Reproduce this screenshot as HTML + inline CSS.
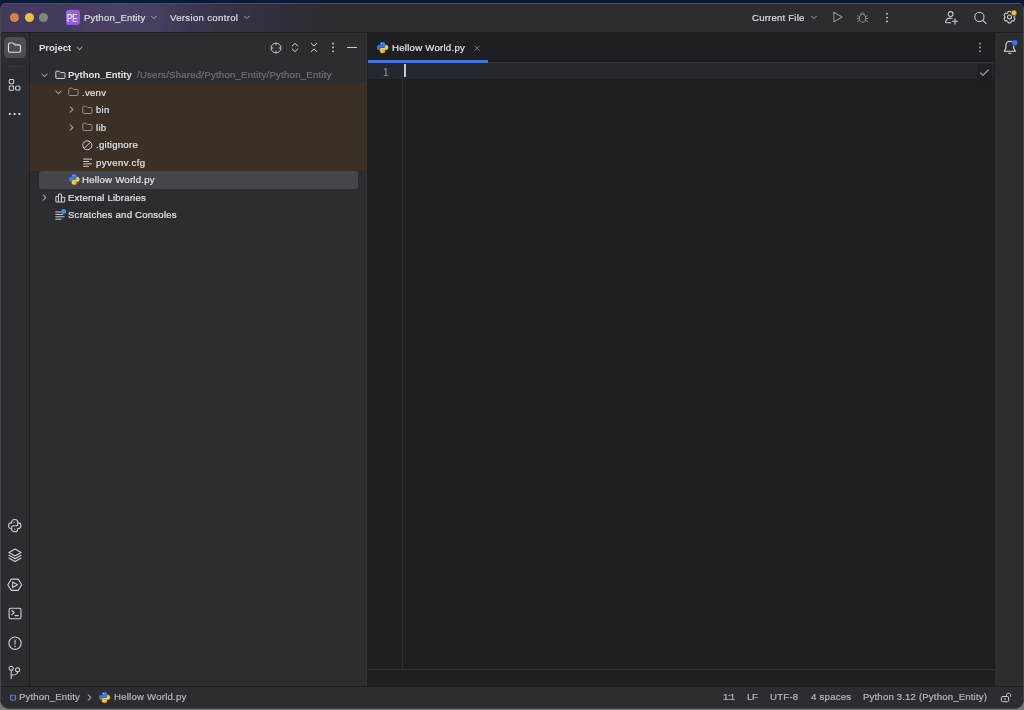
<!DOCTYPE html>
<html lang="en">
<head>
<meta charset="utf-8">
<title>Python_Entity – Hellow World.py</title>
<style>
*{box-sizing:border-box;margin:0;padding:0}
html,body{width:1024px;height:710px;overflow:hidden}
body{position:relative;font-family:"Liberation Sans",sans-serif;font-size:9.6px;letter-spacing:.25px;color:#dfe1e5;
 background:linear-gradient(to bottom,#0a1a36 0,#0a1a36 12px,#77777b 12px,#77777b 100%)}
.abs{position:absolute}
#win{position:absolute;left:0;top:3px;width:1024px;height:705.8px;border-radius:6px 6px 10px 10px;background:#2b2d30;overflow:hidden;
 box-shadow:inset 0 0 0 1px #46474c}
#win:before{content:"";position:absolute;left:0;top:0;right:0;height:1px;background:#515257;z-index:20}
#title{position:absolute;left:1px;top:1px;width:1022px;height:28px;
 background:linear-gradient(to right,#453b5d 0,#42395a 140px,#3c354f 200px,#343140 250px,#2e2e35 300px,#2b2d30 335px)}
#titleline{position:absolute;left:1px;top:29px;width:1022px;height:1px;background:#1e1f22}
.t{position:absolute;white-space:nowrap;line-height:12px;height:12px;will-change:transform;-webkit-text-stroke:.22px currentColor}
#lstrip{position:absolute;left:1px;top:30px;width:28px;height:653px;background:#2b2d30}
#lline{position:absolute;left:29px;top:30px;width:1px;height:653px;background:#1e1f22}
#proj{position:absolute;left:30px;top:30px;width:336px;height:653px;background:#2b2d30}
#pline{position:absolute;left:366px;top:30px;width:1px;height:653px;background:#323438}
#editor{position:absolute;left:367px;top:30px;width:628px;height:653px;background:#1e1f22}
#rstrip{position:absolute;left:995px;top:30px;width:28px;height:653px;background:#2b2d30}
#status{position:absolute;left:1px;top:683px;width:1022px;height:22px;background:#2b2d30;border-top:1px solid #1e1f22}
.row{position:absolute;left:0;width:336px;height:17.5px}
svg{position:absolute;overflow:visible}
</style>
</head>
<body>
<div id="win">
 <div id="title">
  <div class="abs" style="left:60px;top:-20px;width:130px;height:68px;border-radius:50%;background:radial-gradient(ellipse at center,rgba(98,84,130,.28) 0,rgba(98,84,130,.18) 45%,rgba(98,84,130,0) 72%)"></div>
  <div class="abs" style="left:8.9px;top:8.9px;width:9.5px;height:9.5px;border-radius:50%;background:#d6804e"></div>
  <div class="abs" style="left:23.9px;top:8.9px;width:9.5px;height:9.5px;border-radius:50%;background:#ecc046"></div>
  <div class="abs" style="left:37.9px;top:8.9px;width:9.5px;height:9.5px;border-radius:50%;background:#7e8778"></div>
  <div class="abs" style="left:65px;top:6px;width:14.3px;height:14.8px;border-radius:3px;background:linear-gradient(135deg,#a468e8,#8a55d8)"></div>
  <div class="t" style="left:66.2px;top:9px;font-size:10.2px;letter-spacing:0;color:#f4effc;transform:scaleX(.78);transform-origin:0 0">PE</div>
  <div class="t" style="left:83px;top:7.6px;color:#dcdde2;letter-spacing:.17px">Python_Entity</div>
  <svg style="left:148.6px;top:11.3px" width="8" height="6" viewBox="0 0 8 6"><path d="M1.5 1.2 L3.9 3.6 L6.3 1.2" fill="none" stroke="#a6a9b0" stroke-width="1" stroke-linecap="round" stroke-linejoin="round"/></svg>
  <div class="t" style="left:169px;top:7.6px;color:#dcdde2;letter-spacing:.32px">Version control</div>
  <svg style="left:241.7px;top:11.3px" width="8" height="6" viewBox="0 0 8 6"><path d="M1.5 1.2 L3.9 3.6 L6.3 1.2" fill="none" stroke="#a6a9b0" stroke-width="1" stroke-linecap="round" stroke-linejoin="round"/></svg>
  <div class="t" style="left:751px;top:7.6px;color:#dcdde2;letter-spacing:.2px">Current File</div>
  <svg style="left:808.5px;top:11.3px" width="8" height="6" viewBox="0 0 8 6"><path d="M1.5 1.2 L3.9 3.6 L6.3 1.2" fill="none" stroke="#a6a9b0" stroke-width="1" stroke-linecap="round" stroke-linejoin="round"/></svg>
  <svg style="left:831px;top:7.4px" width="12" height="12" viewBox="0 0 12 12"><path d="M1.8 1.3 L10.2 6 L1.8 10.7 Z" fill="none" stroke="#8b9482" stroke-width="1.1" stroke-linejoin="round"/></svg>
  <svg style="left:855px;top:7.7px" width="13" height="11.5" viewBox="0 0 13 12" preserveAspectRatio="none"><g fill="none" stroke="#8b9482" stroke-width="1"><path d="M3.6 5.2 C3.6 3.4 4.8 2.6 6.5 2.6 C8.2 2.6 9.4 3.4 9.4 5.2 L9.4 7.6 C9.4 9.4 8.2 10.6 6.5 10.6 C4.8 10.6 3.6 9.4 3.6 7.6 Z"/><path d="M4.6 2.9 C4.6 1.6 5.4 .9 6.5 .9 C7.6 .9 8.4 1.6 8.4 2.9"/><path d="M3.6 5 L1.2 3.8 M3.6 6.9 L.9 6.9 M3.6 8.6 L1.2 10 M9.4 5 L11.8 3.8 M9.4 6.9 L12.1 6.9 M9.4 8.6 L11.8 10"/></g></svg>
  <svg style="left:884px;top:8px" width="4" height="12" viewBox="0 0 4 12"><g fill="#ced0d6"><circle cx="2" cy="1.8" r=".95"/><circle cx="2" cy="5.6" r=".95"/><circle cx="2" cy="9.4" r=".95"/></g></svg>
  <svg style="left:943px;top:6px" width="15" height="15" viewBox="0 0 15 15"><g fill="none" stroke="#ced0d6" stroke-width="1.05" stroke-linecap="round"><circle cx="6.6" cy="4" r="2.4"/><path d="M8 8.3 C7.6 8.2 7.1 8.1 6.6 8.1 C3.6 8.1 1.9 9.9 1.6 12 C1.5 12.4 1.8 12.7 2.2 12.7 L6.8 12.7"/><path d="M11 8.7 L11 14 M8.4 11.3 L13.7 11.3"/></g></svg>
  <svg style="left:972px;top:7px" width="14" height="14" viewBox="0 0 14 14"><g fill="none" stroke="#ced0d6" stroke-width="1.05" stroke-linecap="round"><circle cx="6.4" cy="5.9" r="4.6"/><path d="M9.8 9.3 L13.2 12.7"/></g></svg>
  <svg style="left:1001px;top:6px" width="15" height="15" viewBox="0 0 15 15"><g fill="none" stroke="#ced0d6" stroke-width="1.05" stroke-linejoin="round"><path d="M6.1 1.6 C6.9 1.1 8.1 1.1 8.9 1.6 L9.3 2.9 C9.6 3 9.9 3.2 10.2 3.4 L11.5 3.1 C12.3 3.7 12.9 4.7 13 5.7 L12 6.6 C12 6.9 12 7.2 12 7.5 L13 8.4 C12.9 9.4 12.3 10.4 11.5 11 L10.2 10.7 C9.9 10.9 9.6 11.1 9.3 11.2 L8.9 12.5 C8.1 13 6.9 13 6.1 12.5 L5.7 11.2 C5.4 11.1 5.1 10.9 4.8 10.7 L3.5 11 C2.7 10.4 2.1 9.4 2 8.4 L3 7.5 C3 7.2 3 6.9 3 6.6 L2 5.7 C2.1 4.7 2.7 3.7 3.5 3.1 L4.8 3.4 C5.1 3.2 5.4 3 5.7 2.9 Z"/><circle cx="7.5" cy="7.05" r="2"/></g><circle cx="12" cy="2.9" r="2.8" fill="#ecc046" stroke="#2b2d30" stroke-width=".6"/></svg>
 </div>
 <div id="titleline"></div>
 <div id="lstrip">
  <div class="abs" style="left:2.8px;top:3.5px;width:22px;height:21.6px;border-radius:4.5px;background:#4b4d52"></div>
  <svg style="left:6px;top:7.5px" width="15" height="14" viewBox="0 0 15 14"><path d="M1.5 3.4 C1.5 2.6 2.1 2 2.9 2 L5.6 2 C6 2 6.3 2.15 6.6 2.4 L8 3.8 L12.1 3.8 C12.9 3.8 13.5 4.4 13.5 5.2 L13.5 9.8 C13.5 10.6 12.9 11.2 12.1 11.2 L2.9 11.2 C2.1 11.2 1.5 10.6 1.5 9.8 Z" fill="none" stroke="#dcdde1" stroke-width="1.15" stroke-linejoin="round"/></svg>
  <div class="abs" style="left:5px;top:32.6px;width:17px;height:1px;background:#35373c"></div>
  <svg style="left:7px;top:45px" width="14" height="14" viewBox="0 0 14 14"><g fill="none" stroke="#ced0d6" stroke-width="1.05"><rect x="1.3" y="1.4" width="4.3" height="4.3" rx=".9"/><rect x="1.3" y="8" width="4.3" height="4.3" rx=".9"/><rect x="7.5" y="8" width="4.6" height="4.3" rx="2"/></g></svg>
  <svg style="left:7px;top:79px" width="14" height="4" viewBox="0 0 14 4"><g fill="#ced0d6"><rect x=".8" y=".9" width="2" height="2" rx=".4"/><rect x="5.6" y=".9" width="2" height="2" rx=".4"/><rect x="10.4" y=".9" width="2" height="2" rx=".4"/></g></svg>

  <svg style="left:6.9px;top:485.9px" width="13.4" height="13.4" viewBox="0 0 13.4 13.4"><g fill="none" stroke="#ced0d6" stroke-width="1.05" stroke-linejoin="round" stroke-linecap="round"><path d="M3.65 3.9 V3.2 C3.65 1.5 4.9 .55 6.7 .55 C8.5 .55 9.75 1.5 9.75 3.2 V3.9 H10.4 C12 3.9 12.85 5 12.85 6.7 C12.85 8.4 12 9.5 10.4 9.5 H9.75 V10.2 C9.75 11.9 8.5 12.85 6.7 12.85 C4.9 12.85 3.65 11.9 3.65 10.2 V9.5 H3 C1.4 9.5 .55 8.4 .55 6.7 C.55 5 1.4 3.9 3 3.9 Z"/><path d="M9.75 3.9 V5 C9.75 6.1 9.1 6.7 8 6.7 H5.4 C4.3 6.7 3.65 7.3 3.65 8.4 V9.5"/></g><circle cx="6.2" cy="3.3" r=".65" fill="#ced0d6"/><circle cx="6.9" cy="10.2" r=".65" fill="#ced0d6"/></svg>

  <svg style="left:6.5px;top:515px" width="14" height="14.5" viewBox="0 0 14 14.5"><g fill="none" stroke="#ced0d6" stroke-width="1.1" stroke-linejoin="round" stroke-linecap="round"><path d="M7 1.1 L13.1 4.5 L7 7.9 L.9 4.5 Z"/><path d="M.9 7.3 L7 10.7 L13.1 7.3"/><path d="M.9 10 L7 13.4 L13.1 10"/></g></svg>

  <svg style="left:6px;top:544.5px" width="15.5" height="13.5" viewBox="0 0 15.5 13.5"><g fill="none" stroke="#ced0d6" stroke-width="1.1" stroke-linejoin="round"><path d="M4.3 1.1 L11.2 1.1 L14.7 6.8 L11.2 12.4 L4.3 12.4 L.8 6.8 Z"/><path d="M5.6 4 L10.6 6.8 L5.6 9.6 Z"/></g></svg>

  <svg style="left:6.5px;top:574px" width="14" height="13" viewBox="0 0 14 13"><g fill="none" stroke="#ced0d6" stroke-width="1.1" stroke-linejoin="round" stroke-linecap="round"><rect x="1.1" y="1.3" width="11.9" height="10.4" rx="1.4"/><path d="M3.8 3.5 L6.2 5.5 L3.8 7.6"/><path d="M7 8.6 L10.2 8.6"/></g></svg>

  <svg style="left:6.5px;top:602.5px" width="14.2" height="14.2" viewBox="0 0 14.2 14.2"><g fill="none" stroke="#ced0d6" stroke-width="1.1" stroke-linecap="round"><circle cx="7.05" cy="7.2" r="6.15"/><path d="M7.05 4 L7.05 8"/></g><circle cx="7.05" cy="10.3" r=".75" fill="#ced0d6"/></svg>

  <svg style="left:7px;top:631.5px" width="13" height="15" viewBox="0 0 13 15"><g fill="none" stroke="#ced0d6" stroke-width="1.05" stroke-linecap="round"><circle cx="3.2" cy="3.2" r="2.05"/><circle cx="9.6" cy="4.7" r="2.05"/><path d="M3.2 5.3 L3.2 13.6"/><path d="M9.6 6.8 C9.6 9.4 8 10.1 3.2 10.1"/></g></svg>
 </div>
 <div id="lline"></div>
 <div id="proj">
  <div class="t" style="left:8.5px;top:8.5px;font-weight:700;-webkit-text-stroke:0;color:#dfe1e5;letter-spacing:-.05px">Project</div>
  <svg style="left:46.1px;top:12.9px" width="7" height="5" viewBox="0 0 7 5"><path d="M.9 1 L3.5 3.7 L6.1 1" fill="none" stroke="#9da0a8" stroke-width="1.05" stroke-linecap="round" stroke-linejoin="round"/></svg>
  <svg style="left:239.7px;top:8.8px" width="12" height="12" viewBox="0 0 12 12"><g fill="none" stroke="#ced0d6" stroke-width=".95"><circle cx="6" cy="6" r="4.9"/><path d="M6 1.1 L6 3.4 M6 8.6 L6 10.9 M1.1 6 L3.4 6 M8.6 6 L10.9 6" stroke-width=".85"/></g></svg>
  <svg style="left:261px;top:9px" width="8" height="11" viewBox="0 0 8 11"><g fill="none" stroke="#ced0d6" stroke-width="1" stroke-linecap="round" stroke-linejoin="round"><path d="M1.2 4 L4 1.4 L6.8 4"/><path d="M1.2 7 L4 9.6 L6.8 7"/></g></svg>
  <svg style="left:279.8px;top:9px" width="8" height="11" viewBox="0 0 8 11"><g fill="none" stroke="#ced0d6" stroke-width="1" stroke-linecap="round" stroke-linejoin="round"><path d="M1.2 1.4 L4 4 L6.8 1.4"/><path d="M1.2 9.6 L4 7 L6.8 9.6"/></g></svg>
  <svg style="left:300.8px;top:9px" width="4" height="11" viewBox="0 0 4 11"><g fill="#ced0d6"><rect x="1.2" y=".8" width="1.7" height="1.7" rx=".4"/><rect x="1.2" y="4.6" width="1.7" height="1.7" rx=".4"/><rect x="1.2" y="8.4" width="1.7" height="1.7" rx=".4"/></g></svg>
  <div class="abs" style="left:317px;top:13.9px;width:9.8px;height:1px;background:#ced0d6"></div>

  <div class="abs" style="left:0;top:50.1px;width:336px;height:87.9px;background:#3a3026"></div>
  <div class="abs" style="left:8.6px;top:138.3px;width:319.6px;height:17.3px;border-radius:3.5px;background:#44464b"></div>

  <svg style="left:11.2px;top:39.5px" width="7" height="5" viewBox="0 0 7 5"><path d="M.9 1 L3.5 3.7 L6.1 1" fill="none" stroke="#9da0a8" stroke-width="1.05" stroke-linecap="round" stroke-linejoin="round"/></svg>
  <svg style="left:24.6px;top:36.8px" width="11" height="10" viewBox="0 0 11 10"><path d="M.8 2.2 C.8 1.6 1.2 1.2 1.8 1.2 L3.9 1.2 C4.2 1.2 4.4 1.3 4.6 1.5 L5.6 2.5 L9 2.5 C9.6 2.5 10 2.9 10 3.5 L10 7.5 C10 8.1 9.6 8.5 9 8.5 L1.8 8.5 C1.2 8.5 .8 8.1 .8 7.5 Z" fill="#3b3d42" stroke="#ced0d6" stroke-width="1" stroke-linejoin="round"/></svg>
  <div class="t" style="left:38px;top:33.25px;height:17.5px;line-height:17.5px;font-weight:700;-webkit-text-stroke:0;font-size:9.6px;letter-spacing:-.06px">Python_Entity</div>
  <div class="t" style="left:107px;top:33.25px;height:17.5px;line-height:17.5px;color:#6d7077;letter-spacing:.235px">/Users/Shared/Python_Entity/Python_Entity</div>

  <svg style="left:25.2px;top:57.0px" width="7" height="5" viewBox="0 0 7 5"><path d="M.9 1 L3.5 3.7 L6.1 1" fill="none" stroke="#9da0a8" stroke-width="1.05" stroke-linecap="round" stroke-linejoin="round"/></svg>
  <svg style="left:38.1px;top:54.4px" width="11" height="10" viewBox="0 0 11 10"><path d="M.8 2.2 C.8 1.6 1.2 1.2 1.8 1.2 L3.9 1.2 C4.2 1.2 4.4 1.3 4.6 1.5 L5.6 2.5 L9 2.5 C9.6 2.5 10 2.9 10 3.5 L10 7.5 C10 8.1 9.6 8.5 9 8.5 L1.8 8.5 C1.2 8.5 .8 8.1 .8 7.5 Z" fill="none" stroke="#8f9094" stroke-width="1" stroke-linejoin="round"/></svg>
  <div class="t" style="left:52px;top:50.75px;height:17.5px;line-height:17.5px;">.venv</div>

  <svg style="left:39.3px;top:73.1px" width="5" height="7" viewBox="0 0 5 7"><path d="M1.2 .9 L3.9 3.5 L1.2 6.1" fill="none" stroke="#9da0a8" stroke-width="1.05" stroke-linecap="round" stroke-linejoin="round"/></svg>
  <svg style="left:52px;top:71.7px" width="11" height="10" viewBox="0 0 11 10"><path d="M.8 2.2 C.8 1.6 1.2 1.2 1.8 1.2 L3.9 1.2 C4.2 1.2 4.4 1.3 4.6 1.5 L5.6 2.5 L9 2.5 C9.6 2.5 10 2.9 10 3.5 L10 7.5 C10 8.1 9.6 8.5 9 8.5 L1.8 8.5 C1.2 8.5 .8 8.1 .8 7.5 Z" fill="none" stroke="#8f9094" stroke-width="1" stroke-linejoin="round"/></svg>
  <div class="t" style="left:66px;top:68.25px;height:17.5px;line-height:17.5px;">bin</div>

  <svg style="left:39.3px;top:90.6px" width="5" height="7" viewBox="0 0 5 7"><path d="M1.2 .9 L3.9 3.5 L1.2 6.1" fill="none" stroke="#9da0a8" stroke-width="1.05" stroke-linecap="round" stroke-linejoin="round"/></svg>
  <svg style="left:52px;top:89.2px" width="11" height="10" viewBox="0 0 11 10"><path d="M.8 2.2 C.8 1.6 1.2 1.2 1.8 1.2 L3.9 1.2 C4.2 1.2 4.4 1.3 4.6 1.5 L5.6 2.5 L9 2.5 C9.6 2.5 10 2.9 10 3.5 L10 7.5 C10 8.1 9.6 8.5 9 8.5 L1.8 8.5 C1.2 8.5 .8 8.1 .8 7.5 Z" fill="none" stroke="#8f9094" stroke-width="1" stroke-linejoin="round"/></svg>
  <div class="t" style="left:66px;top:85.75px;height:17.5px;line-height:17.5px;">lib</div>

  <svg style="left:52.4px;top:106.7px" width="10.6" height="10.6" viewBox="0 0 10.6 10.6"><g fill="none" stroke="#ced0d6" stroke-width="1"><circle cx="5.3" cy="5.3" r="4.5"/><path d="M2.2 8.4 L8.4 2.2"/></g></svg>
  <div class="t" style="left:66px;top:103.25px;height:17.5px;line-height:17.5px;">.gitignore</div>

  <svg style="left:53px;top:125.0px" width="10" height="9" viewBox="0 0 10 9"><g stroke="#ced0d6" stroke-width="1"><path d="M.3 1.1 H9 M.3 3.5 H6 M.3 5.9 H9 M.3 8.3 H6"/></g></svg>
  <div class="t" style="left:66px;top:120.75px;height:17.5px;line-height:17.5px;letter-spacing:.44px">pyvenv.cfg</div>

  <svg style="left:38.7px;top:141.4px" width="10.5" height="10.8" viewBox=".85 .65 14.3 14.7" preserveAspectRatio="none"><path d="M7.9 1 C5.2 1 5.3 2.2 5.3 2.2 L5.3 4.4 L8 4.4 L8 5 L3.6 5 C3.6 5 1.2 4.8 1.2 8 C1.2 11.2 3.2 11 3.2 11 L4.6 11 L4.6 9.2 C4.6 9.2 4.5 7.3 6.5 7.3 L9.4 7.3 C9.4 7.3 11 7.3 11 5.7 L11 2.8 C11 2.8 11.3 1 7.9 1 Z" fill="#3f7be6" stroke="#3f7be6" stroke-width=".7"/><path d="M8.1 15 C10.8 15 10.7 13.8 10.7 13.8 L10.7 11.6 L8 11.6 L8 11 L12.4 11 C12.4 11 14.8 11.2 14.8 8 C14.8 4.8 12.8 5 12.8 5 L11.4 5 L11.4 6.8 C11.4 6.8 11.5 8.7 9.5 8.7 L6.6 8.7 C6.6 8.7 5 8.7 5 10.3 L5 13.2 C5 13.2 4.7 15 8.1 15 Z" fill="#f6cf47" stroke="#f6cf47" stroke-width=".7"/><circle cx="6.6" cy="2.7" r=".7" fill="#dfe9f8"/><circle cx="9.4" cy="13.3" r=".7" fill="#c08a3a"/></svg>
  <div class="t" style="left:52px;top:138.25px;height:17.5px;line-height:17.5px;">Hellow World.py</div>

  <svg style="left:12.0px;top:161.0px" width="5" height="7" viewBox="0 0 5 7"><path d="M1.2 .9 L3.9 3.5 L1.2 6.1" fill="none" stroke="#9da0a8" stroke-width="1.05" stroke-linecap="round" stroke-linejoin="round"/></svg>
  <svg style="left:24.8px;top:159.5px" width="11" height="10" viewBox="0 0 11 10"><g fill="none" stroke="#ced0d6" stroke-width="1" stroke-linejoin="round"><rect x=".9" y="3.4" width="2.6" height="5.6"/><rect x="3.5" y="1" width="2.9" height="8"/><rect x="6.4" y="4.3" width="3.3" height="4.7"/></g></svg>
  <div class="t" style="left:38px;top:155.75px;height:17.5px;line-height:17.5px;letter-spacing:.18px">External Libraries</div>

  <svg style="left:24.8px;top:176.0px" width="12" height="12" viewBox="0 0 12 12"><g stroke="#ced0d6" stroke-width="1"><path d="M.4 3 H5.8 M.4 5.4 H8 M.4 7.8 H9.6 M.4 10.2 H6.4"/></g><circle cx="8.6" cy="2.6" r="2.5" fill="#4a88e8"/></svg>
  <div class="t" style="left:38px;top:173.25px;height:17.5px;line-height:17.5px;letter-spacing:.22px">Scratches and Consoles</div>
 </div>
 <div id="pline" style="height:50px"></div><div id="pline2" class="abs" style="left:366px;top:168px;width:1px;height:515px;background:#323438"></div><div class="abs" style="left:366px;top:80.1px;width:1px;height:87.9px;background:#3a3026"></div>
 <div id="editor">
  <svg style="left:9.9px;top:9.1px" width="11.3" height="11.0" viewBox=".85 .65 14.3 14.7" preserveAspectRatio="none"><path d="M7.9 1 C5.2 1 5.3 2.2 5.3 2.2 L5.3 4.4 L8 4.4 L8 5 L3.6 5 C3.6 5 1.2 4.8 1.2 8 C1.2 11.2 3.2 11 3.2 11 L4.6 11 L4.6 9.2 C4.6 9.2 4.5 7.3 6.5 7.3 L9.4 7.3 C9.4 7.3 11 7.3 11 5.7 L11 2.8 C11 2.8 11.3 1 7.9 1 Z" fill="#3f7be6" stroke="#3f7be6" stroke-width=".7"/><path d="M8.1 15 C10.8 15 10.7 13.8 10.7 13.8 L10.7 11.6 L8 11.6 L8 11 L12.4 11 C12.4 11 14.8 11.2 14.8 8 C14.8 4.8 12.8 5 12.8 5 L11.4 5 L11.4 6.8 C11.4 6.8 11.5 8.7 9.5 8.7 L6.6 8.7 C6.6 8.7 5 8.7 5 10.3 L5 13.2 C5 13.2 4.7 15 8.1 15 Z" fill="#f6cf47" stroke="#f6cf47" stroke-width=".7"/><circle cx="6.6" cy="2.7" r=".7" fill="#dfe9f8"/><circle cx="9.4" cy="13.3" r=".7" fill="#c08a3a"/></svg>
  <div class="t" style="left:25px;top:8.7px;color:#dfe1e5;letter-spacing:.26px">Hellow World.py</div>
  <svg style="left:106.6px;top:11.9px" width="6.4" height="6.4" viewBox="0 0 6.4 6.4"><path d="M.7 .7 L5.7 5.7 M5.7 .7 L.7 5.7" stroke="#7f838a" stroke-width=".95" fill="none"/></svg>
  <div class="abs" style="left:121px;top:29px;width:506px;height:1px;background:#313338"></div>
  <div class="abs" style="left:1px;top:26.8px;width:120.3px;height:3.2px;background:#4272d8"></div>
  <svg style="left:611px;top:9px" width="4" height="11" viewBox="0 0 4 11"><g fill="#a6a8ae"><rect x="1.2" y=".8" width="1.7" height="1.7" rx=".4"/><rect x="1.2" y="4.6" width="1.7" height="1.7" rx=".4"/><rect x="1.2" y="8.4" width="1.7" height="1.7" rx=".4"/></g></svg>
  <div class="abs" style="left:1px;top:30px;width:626px;height:16px;background:#26282d"></div><div class="abs" style="left:609.6px;top:30.5px;width:15.8px;height:17px;border-radius:3.5px;background:#1e1f22"></div>
  <div class="abs" style="left:35px;top:30px;width:1px;height:606px;background:#2b2d31"></div>
  <div class="abs" style="left:1px;top:636px;width:627px;height:1px;background:#2f3135"></div>
  <div class="t" style="left:15.6px;top:33.5px;font-size:10.2px;letter-spacing:0;-webkit-text-stroke:0;color:#979aa0">1</div>
  <div class="abs" style="left:37.2px;top:31.2px;width:1.7px;height:13px;background:#c6c8ce"></div>
  <svg style="left:612px;top:35px" width="11" height="9" viewBox="0 0 11 9"><path d="M1.2 4.6 L4 7.2 L9.6 1.6" fill="none" stroke="#838b7b" stroke-width="1.5" stroke-linejoin="round"/></svg>
 </div>
 <div id="rstrip">
  <svg style="left:7.5px;top:7px" width="14" height="15" viewBox="0 0 14 15"><g fill="none" stroke="#dcdde1" stroke-width="1.1" stroke-linejoin="round" stroke-linecap="round"><path d="M1.2 11.3 L2.9 8.3 L2.9 5.3 C2.9 2.9 4.6 1.3 6.8 1.3 C9 1.3 10.7 2.9 10.7 5.3 L10.7 8.3 L12.4 11.3 Z"/><path d="M5.6 13.3 L8 13.3"/></g><circle cx="11.8" cy="2.7" r="3.1" fill="#2b2d30"/><circle cx="11.8" cy="2.7" r="2.75" fill="#3f74de"/></svg>
 </div>
 <div id="status">
  <svg style="left:8.3px;top:7px" width="8" height="8" viewBox="0 0 8 8"><rect x="1.6" y="1.2" width="5" height="5" rx="1.2" fill="#38353f" stroke="#8d8a98" stroke-width=".8"/><path d="M2.6 1.2 C2 1.2 1.6 1.6 1.6 2.3 L1.6 5.1 C1.6 5.7 1.9 6.1 2.4 6.2 M5.6 1.2 C6.2 1.2 6.6 1.6 6.6 2.3 L6.6 5.1 C6.6 5.7 6.3 6.1 5.8 6.2" stroke="#4a84ee" stroke-width="1.05" fill="none"/></svg>
  <div class="t" style="left:17.9px;top:4px;color:#b3b6bd;letter-spacing:.14px">Python_Entity</div>
  <svg style="left:86px;top:6.7px" width="5" height="7" viewBox="0 0 5 7"><path d="M1.2 .9 L3.9 3.5 L1.2 6.1" fill="none" stroke="#9da0a8" stroke-width="1.05" stroke-linecap="round" stroke-linejoin="round"/></svg>
  <svg style="left:98.2px;top:4.7px" width="11.2" height="10.8" viewBox=".85 .65 14.3 14.7" preserveAspectRatio="none"><path d="M7.9 1 C5.2 1 5.3 2.2 5.3 2.2 L5.3 4.4 L8 4.4 L8 5 L3.6 5 C3.6 5 1.2 4.8 1.2 8 C1.2 11.2 3.2 11 3.2 11 L4.6 11 L4.6 9.2 C4.6 9.2 4.5 7.3 6.5 7.3 L9.4 7.3 C9.4 7.3 11 7.3 11 5.7 L11 2.8 C11 2.8 11.3 1 7.9 1 Z" fill="#3f7be6" stroke="#3f7be6" stroke-width=".7"/><path d="M8.1 15 C10.8 15 10.7 13.8 10.7 13.8 L10.7 11.6 L8 11.6 L8 11 L12.4 11 C12.4 11 14.8 11.2 14.8 8 C14.8 4.8 12.8 5 12.8 5 L11.4 5 L11.4 6.8 C11.4 6.8 11.5 8.7 9.5 8.7 L6.6 8.7 C6.6 8.7 5 8.7 5 10.3 L5 13.2 C5 13.2 4.7 15 8.1 15 Z" fill="#f6cf47" stroke="#f6cf47" stroke-width=".7"/><circle cx="6.6" cy="2.7" r=".7" fill="#dfe9f8"/><circle cx="9.4" cy="13.3" r=".7" fill="#c08a3a"/></svg>
  <div class="t" style="left:112.9px;top:4px;color:#b3b6bd;letter-spacing:.23px">Hellow World.py</div>
  <div class="t" style="left:722.4px;top:4px;color:#b3b6bd;letter-spacing:-.6px">1:1</div>
  <div class="t" style="left:745.8px;top:4px;color:#b3b6bd;letter-spacing:-.3px">LF</div>
  <div class="t" style="left:768.6px;top:4px;color:#b3b6bd">UTF-8</div>
  <div class="t" style="left:809.9px;top:4px;color:#b3b6bd">4 spaces</div>
  <div class="t" style="left:862.4px;top:4px;color:#b3b6bd;letter-spacing:.17px">Python 3.12 (Python_Entity)</div>
  <svg style="left:999px;top:5px" width="12" height="11" viewBox="0 0 12 11"><g fill="none" stroke="#ced0d6" stroke-width="1" stroke-linecap="round"><rect x="1.4" y="4.5" width="7.2" height="5.2" rx="1.2"/><path d="M6.4 4.5 L6.4 3.3 C6.4 2 7.3 1.2 8.5 1.2 C9.7 1.2 10.6 2 10.6 3.3 L10.6 4.4"/></g><rect x="4.3" y="6.3" width="1.4" height="1.5" fill="#ced0d6"/></svg>
 </div>
</div>
</body>
</html>
